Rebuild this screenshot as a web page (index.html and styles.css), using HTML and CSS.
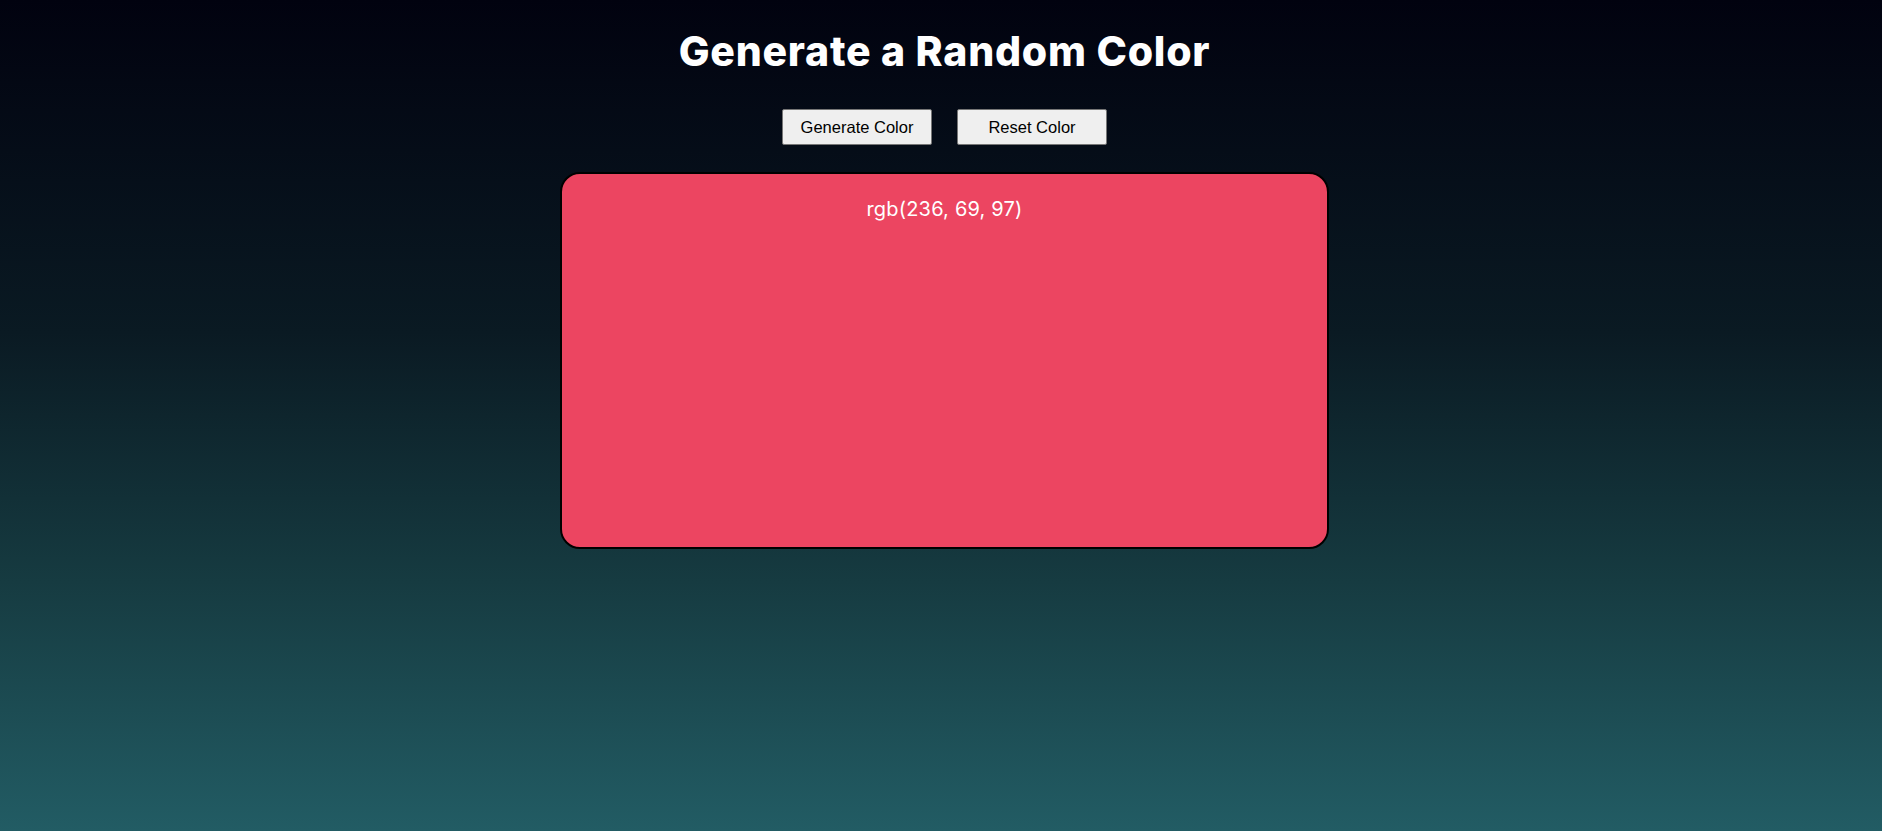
FILE: index.html
```html
<!DOCTYPE html>
<html lang="en">
<head>
<meta charset="UTF-8">
<title>Random Color</title>
<link rel="stylesheet" href="styles.css">
</head>
<body>
<main class="page">
  <h1 class="title">Generate a Random Color</h1>
  <div class="controls">
    <button class="btn">Generate Color</button>
    <button class="btn">Reset Color</button>
  </div>
  <section class="swatch">
    <p class="swatch-label">rgb(236, 69, 97)</p>
  </section>
</main>
</body>
</html>
```
FILE: styles.css
```css
html, body {
  margin: 0;
  padding: 0;
  height: 100%;
}
body {
  background: linear-gradient(to bottom, #01020f 0%, #0a1a23 40%, #163b41 70%, #225c64 100%);
  min-height: 831px;
}
.page {
  display: flex;
  flex-direction: column;
  align-items: center;
  padding-left: 7px;
  padding-top: 23px;
}
.title {
  margin: 0;
  font-family: Inter, "Open Sans", sans-serif;
  font-weight: 800;
  font-size: 41px;
  letter-spacing: 0.75px;
  line-height: 56px;
  color: #ffffff;
}
.controls {
  display: flex;
  gap: 25px;
  margin-top: 30px;
}
.btn {
  width: 150px;
  height: 36px;
  background: #efefef;
  border: 1px solid #767676;
  border-radius: 2px;
  font-family: "Liberation Sans", Arial, sans-serif;
  font-size: 16.5px;
  color: #000;
  padding: 0;
}
.swatch {
  margin-top: 27px;
  width: 765px;
  height: 373px;
  background: #ec4561;
  border: 2px solid #000;
  border-radius: 20px;
  display: flex;
  justify-content: center;
}
.swatch-label {
  margin: 20px 0 0;
  font-family: Inter, "Open Sans", sans-serif;
  font-size: 20px;
  letter-spacing: 0.2px;
  line-height: 30px;
  color: #ffffff;
}
```
